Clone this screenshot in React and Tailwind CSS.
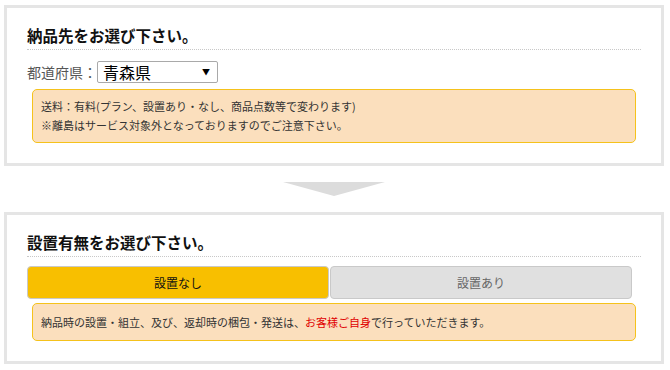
export default function App() {
  const font = { fontFamily: '"Noto Sans CJK JP", "Noto Sans", sans-serif' };
  return (
    <div className="w-[670px] h-[370px] bg-white pt-[5px] pl-[4px]" style={font}>
      <div className="w-[660px] border-[3px] border-[#e5e5e5] px-[20px] pt-[16px] pb-[20px]">
        <h2 className="text-[15.5px] font-bold leading-[22px] text-[#111] pb-[3px] border-b border-dotted border-[#c8c8c8]">
          納品先をお選び下さい。
        </h2>
        <div className="mt-[11px] flex items-center">
          <span className="text-[14px] text-[#555] leading-[22px]">都道府県：</span>
          <div className="w-[121px] h-[22px] border border-[#a9a9a9] rounded-[2px] flex items-center justify-between pl-[5px] pr-[7px]">
            <span className="text-[16px] leading-[20px] text-black">青森県</span>
            <span className="text-[8px] text-black">▼</span>
          </div>
        </div>
        <div className="mt-[6px] mx-[5px] bg-[#fbdfbd] border border-[#f5c21b] rounded-[5px] px-[8px] py-[7px] text-[11px] leading-[19px] text-[#333]">
          <div>送料：有料(プラン、設置あり・なし、商品点数等で変わります)</div>
          <div>※離島はサービス対象外となっておりますのでご注意下さい。</div>
        </div>
      </div>

      <div className="w-[660px] flex justify-center py-[16px]">
        <svg width="102" height="14" viewBox="0 0 102 14">
          <polygon points="0,0 102,0 51,14" fill="#dcdcdc" />
        </svg>
      </div>

      <div className="w-[660px] border-[3px] border-[#e5e5e5] px-[20px] pt-[16px] pb-[20px]">
        <h2 className="text-[15.5px] font-bold leading-[22px] text-[#111] pb-[3px] border-b border-dotted border-[#c8c8c8]">
          設置有無をお選び下さい。
        </h2>
        <div className="mt-[9px] flex gap-[1px] pr-[9px]">
          <div className="flex-1 h-[33px] bg-[#f8bf00] border border-[#c9c9c9] rounded-[4px] flex items-center justify-center text-[12px] text-[#111]">
            設置なし
          </div>
          <div className="flex-1 h-[33px] bg-[#e0e0e0] border border-[#c9c9c9] rounded-[4px] flex items-center justify-center text-[12px] text-[#666]">
            設置あり
          </div>
        </div>
        <div className="mt-[4px] mx-[5px] h-[38px] bg-[#fbdfbd] border border-[#f5c21b] rounded-[5px] px-[8px] flex items-center text-[11px] text-[#333]">
          <span>
            納品時の設置・組立、及び、返却時の梱包・発送は、
            <span className="text-[#e00000]">お客様ご自身</span>
            で行っていただきます。
          </span>
        </div>
      </div>
    </div>
  );
}
